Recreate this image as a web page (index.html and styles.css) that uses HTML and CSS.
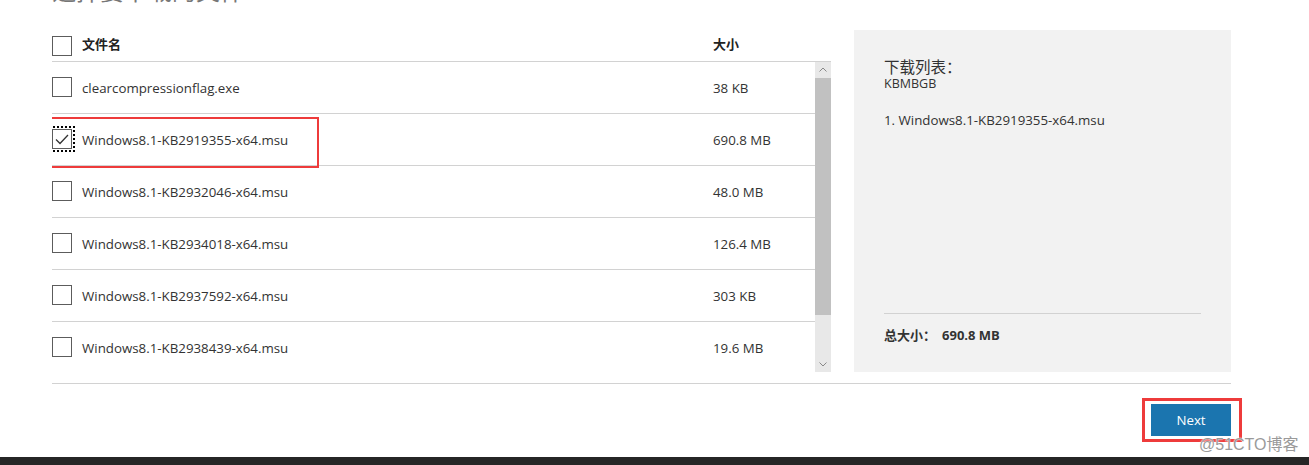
FILE: index.html
```html
<!DOCTYPE html>
<html lang="zh">
<head>
<meta charset="utf-8">
<title>下载</title>
<link rel="stylesheet" href="styles.css">
</head>
<body>
<div class="page">
  <div class="page-title"><span>选择要下载的文件</span></div>
  <div class="content">
    <div class="files">
      <div class="files-head">
        <span class="cb"></span>
        <span class="col-name">文件名</span>
        <span class="col-size">大小</span>
      </div>
      <div class="files-body">
        <div class="list">
          <div class="row"><span class="cb"></span><span class="col-name">clearcompressionflag.exe</span><span class="col-size">38 KB</span></div>
          <div class="row selected">
            <span class="cb checked"><svg viewBox="0 0 20 20" width="20" height="20"><path d="M4 10.5 L8 14.5 L16 6" fill="none" stroke="#333" stroke-width="1.3"/></svg></span>
            <span class="col-name">Windows8.1-KB2919355-x64.msu</span><span class="col-size">690.8 MB</span>
            <span class="mark-row"></span>
          </div>
          <div class="row"><span class="cb"></span><span class="col-name">Windows8.1-KB2932046-x64.msu</span><span class="col-size">48.0 MB</span></div>
          <div class="row"><span class="cb"></span><span class="col-name">Windows8.1-KB2934018-x64.msu</span><span class="col-size">126.4 MB</span></div>
          <div class="row"><span class="cb"></span><span class="col-name">Windows8.1-KB2937592-x64.msu</span><span class="col-size">303 KB</span></div>
          <div class="row"><span class="cb"></span><span class="col-name">Windows8.1-KB2938439-x64.msu</span><span class="col-size">19.6 MB</span></div>
        </div>
        <div class="scrollbar">
          <span class="sb-btn"><svg viewBox="0 0 16 16" width="16" height="16"><path d="M4.5 9.5 L8 6 L11.5 9.5" fill="none" stroke="#888" stroke-width="1"/></svg></span>
          <span class="sb-thumb"></span>
          <span class="sb-track"></span>
          <span class="sb-btn"><svg viewBox="0 0 16 16" width="16" height="16"><path d="M4.5 6.5 L8 10 L11.5 6.5" fill="none" stroke="#888" stroke-width="1"/></svg></span>
        </div>
      </div>
    </div>
    <aside class="summary">
      <div class="summary-main">
        <div class="summary-title">下载列表：</div>
        <div class="summary-sub">KBMBGB</div>
        <div class="summary-item">1. Windows8.1-KB2919355-x64.msu</div>
      </div>
      <div class="summary-total"><span class="total-label">总大小：</span><span>690.8 MB</span></div>
    </aside>
  </div>
  <div class="actions">
    <div class="btn-wrap">
      <button class="btn-next" type="button">Next</button>
      <span class="mark-btn"></span>
    </div>
  </div>
</div>
<footer class="footer"></footer>
<div class="watermark">@51CTO博客</div>
</body>
</html>
```

FILE: styles.css
```css
html, body {
  margin: 0;
  padding: 0;
  background: #fff;
  height: 465px;
  overflow: hidden;
}
body {
  font-family: "Open Sans", "Noto Sans CJK SC", sans-serif;
  color: #333;
  font-size: 13.3px;
  position: relative;
}
.page {
  padding: 0 78px 0 52px;
}
.page-title {
  height: 30px;
  overflow: hidden;
}
.page-title span {
  display: block;
  margin-top: -22px;
  font-size: 24px;
  line-height: 24px;
  color: #777;
  font-family: "Noto Sans CJK SC", sans-serif;
}
.content {
  display: flex;
  gap: 23px;
  height: 342px;
  border-bottom: 1px solid #d2d2d2;
  padding-bottom: 11px;
}
.files {
  width: 779px;
  display: flex;
  flex-direction: column;
}
.files-head {
  height: 31px;
  display: flex;
  align-items: center;
  border-bottom: 1px solid #d2d2d2;
  font-weight: bold;
  font-family: "Noto Sans CJK SC", sans-serif;
  font-size: 13px;
  color: #222;
}
.files-head .col-name { margin-top: -4px; }
.files-head .col-size { margin-top: -5px; }
.cb {
  width: 20px;
  height: 20px;
  box-sizing: border-box;
  border: 1px solid #5c5c5c;
  background: #fff;
  flex: none;
  position: relative;
}
.cb svg {
  position: absolute;
  left: -1px;
  top: -1px;
}
.cb.checked {
  outline: 2px dotted #000;
  outline-offset: 1px;
}
.col-name {
  margin-left: 10px;
  width: 631px;
}
.col-size {
  flex: 1;
}
.files-body {
  display: flex;
  height: 310px;
}
.list {
  flex: 1;
  overflow: hidden;
}
.row {
  height: 51px;
  border-bottom: 1px solid #d2d2d2;
  display: flex;
  align-items: center;
  position: relative;
  color: #333;
}
.row .cb { margin-top: -1px; }
.mark-row {
  position: absolute;
  left: -20px;
  top: 3px;
  width: 287px;
  height: 51px;
  box-sizing: border-box;
  border: 2px solid #ee3b3b;
  pointer-events: none;
}
.scrollbar {
  width: 16px;
  display: flex;
  flex-direction: column;
  background: #e8e8e8;
}
.sb-btn {
  height: 16px;
  display: block;
}
.sb-btn svg { display: block; }
.sb-thumb {
  height: 237px;
  background: #c1c1c1;
}
.sb-track {
  flex: 1;
}
.summary {
  width: 377px;
  background: #f2f2f2;
  display: flex;
  flex-direction: column;
  padding: 27px 30px 0 30px;
  box-sizing: border-box;
}
.summary-main {
  flex: 1;
}
.summary-title {
  font-family: "Noto Sans CJK SC", sans-serif;
  font-size: 15.5px;
  line-height: 19px;
  color: #333;
}
.summary-sub {
  font-size: 12.5px;
  line-height: 15px;
  color: #333;
}
.summary-item {
  margin-top: 20px;
  font-size: 13.3px;
  line-height: 18px;
  color: #333;
}
.summary-total {
  border-top: 1px solid #d2d2d2;
  height: 59px;
  padding-top: 11px;
  box-sizing: border-box;
  font-weight: bold;
  font-size: 13px;
  line-height: 20px;
  color: #333;
}
.total-label {
  font-family: "Noto Sans CJK SC", sans-serif;
  margin-right: 6px;
}
.actions {
  display: flex;
  justify-content: flex-end;
  padding-top: 20px;
  height: 73px;
  box-sizing: border-box;
}
.btn-wrap {
  position: relative;
  height: 32px;
}
.btn-next {
  width: 80px;
  height: 32px;
  border: 0;
  background: #1b75af;
  color: #fff;
  font-family: "Open Sans", sans-serif;
  font-size: 13.3px;
  padding: 0;
}
.mark-btn {
  position: absolute;
  left: -9px;
  right: -11px;
  top: -6px;
  bottom: -6px;
  border: 3px solid #ee3b3b;
  pointer-events: none;
}
.footer {
  height: 10px;
  background: #262626;
}
.watermark {
  position: absolute;
  left: 1199px;
  top: 436px;
  font-family: "Liberation Sans", "Noto Sans CJK SC", sans-serif;
  font-size: 16px;
  line-height: 18px;
  color: #9a9a9a;
  text-shadow: 0 0 2px #fff, 0 0 1px #fff;
}
```
